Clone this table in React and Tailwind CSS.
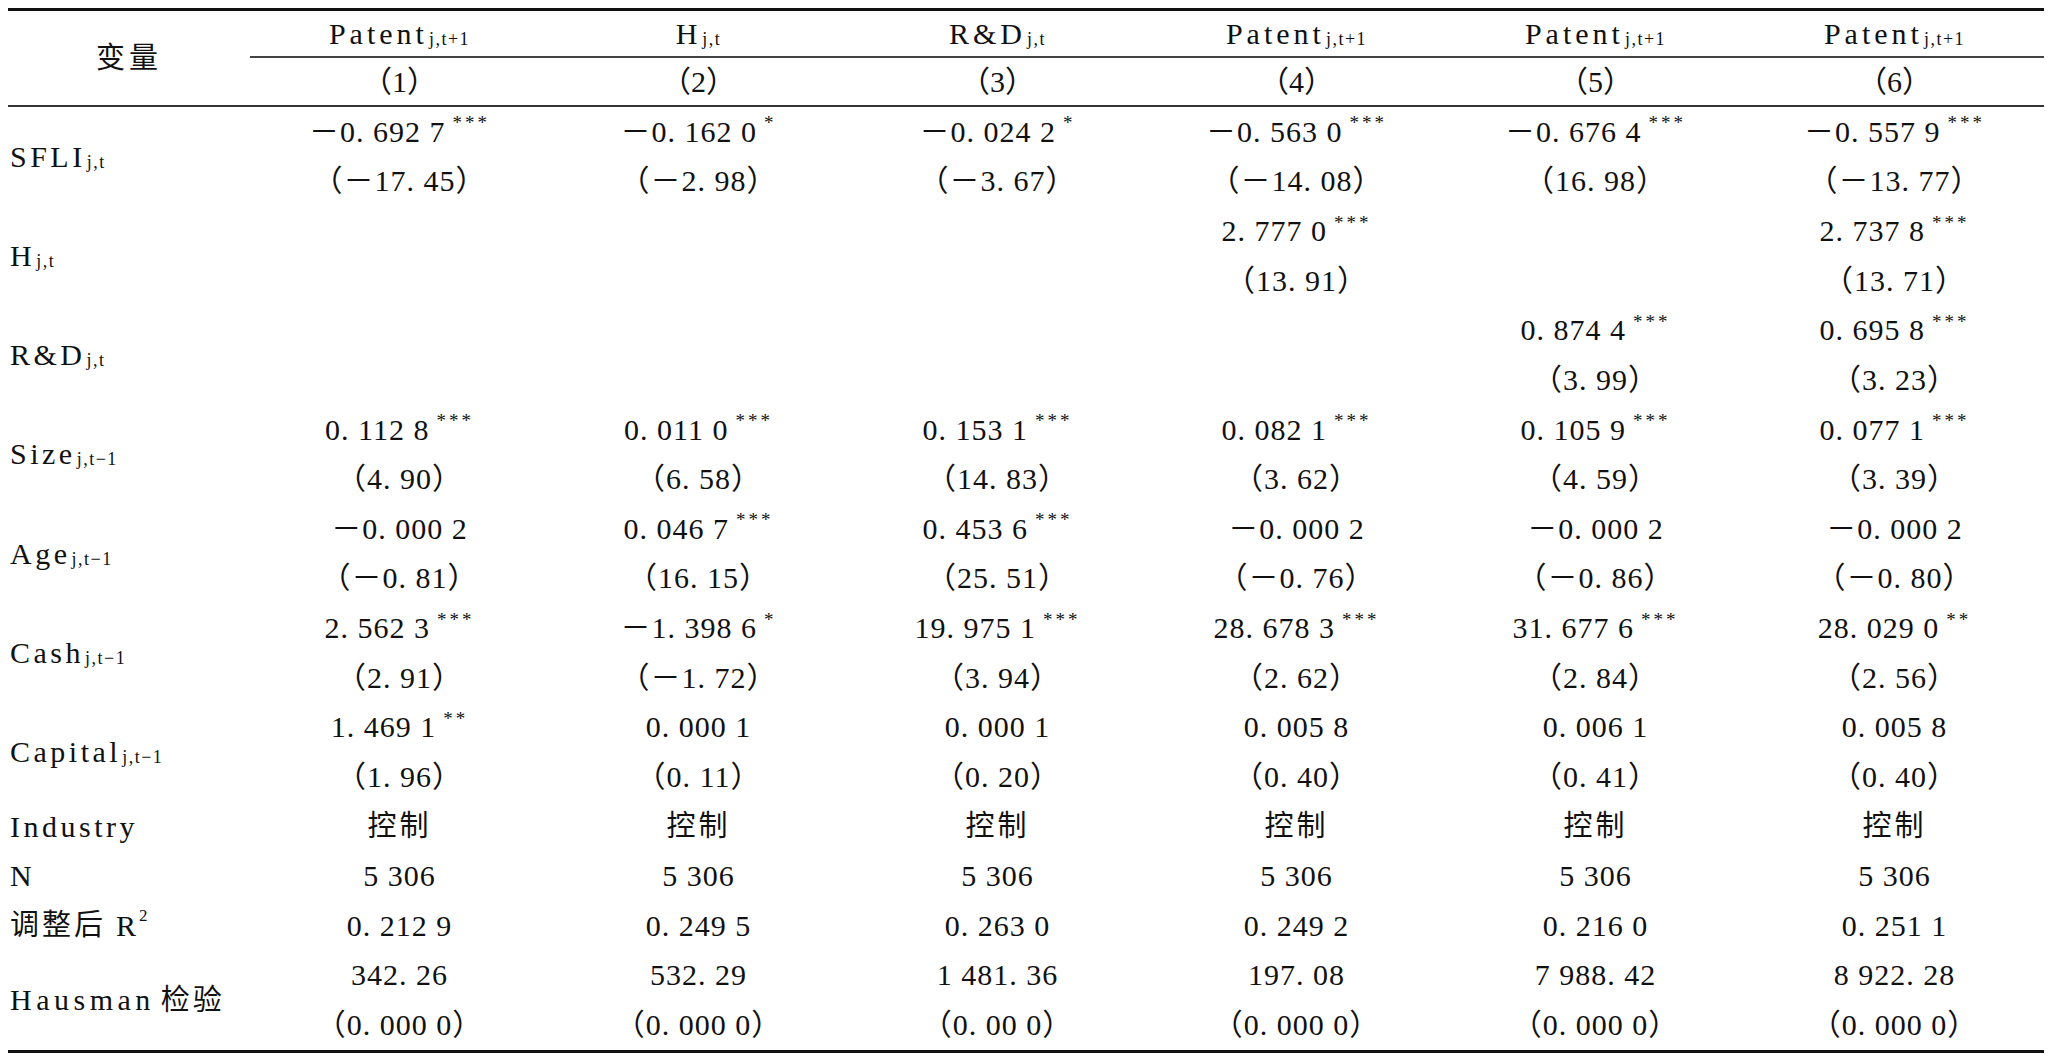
const GRID = "grid grid-cols-[242px_repeat(6,299px)]";
const LINE = "h-[49.63px]";

const rows = [
  {
    label: ["SFLI", "j,t"],
    coef: ["－0. 692 7***", "－0. 162 0*", "－0. 024 2*", "－0. 563 0***", "－0. 676 4***", "－0. 557 9***"],
    t: ["（－17. 45）", "（－2. 98）", "（－3. 67）", "（－14. 08）", "（16. 98）", "（－13. 77）"],
  },
  {
    label: ["H", "j,t"],
    coef: ["", "", "", "2. 777 0***", "", "2. 737 8***"],
    t: ["", "", "", "（13. 91）", "", "（13. 71）"],
  },
  {
    label: ["R&D", "j,t"],
    coef: ["", "", "", "", "0. 874 4***", "0. 695 8***"],
    t: ["", "", "", "", "（3. 99）", "（3. 23）"],
  },
  {
    label: ["Size", "j,t−1"],
    coef: ["0. 112 8***", "0. 011 0***", "0. 153 1***", "0. 082 1***", "0. 105 9***", "0. 077 1***"],
    t: ["（4. 90）", "（6. 58）", "（14. 83）", "（3. 62）", "（4. 59）", "（3. 39）"],
  },
  {
    label: ["Age", "j,t−1"],
    coef: ["－0. 000 2", "0. 046 7***", "0. 453 6***", "－0. 000 2", "－0. 000 2", "－0. 000 2"],
    t: ["（－0. 81）", "（16. 15）", "（25. 51）", "（－0. 76）", "（－0. 86）", "（－0. 80）"],
  },
  {
    label: ["Cash", "j,t−1"],
    coef: ["2. 562 3***", "－1. 398 6*", "19. 975 1***", "28. 678 3***", "31. 677 6***", "28. 029 0**"],
    t: ["（2. 91）", "（－1. 72）", "（3. 94）", "（2. 62）", "（2. 84）", "（2. 56）"],
  },
  {
    label: ["Capital", "j,t−1"],
    coef: ["1. 469 1**", "0. 000 1", "0. 000 1", "0. 005 8", "0. 006 1", "0. 005 8"],
    t: ["（1. 96）", "（0. 11）", "（0. 20）", "（0. 40）", "（0. 41）", "（0. 40）"],
  },
];

function Sub({ children }) {
  return (
    <span className="relative top-[5px] ml-[1px] text-[18px] tracking-[1.5px]">
      {children}
    </span>
  );
}

function Cell({ text }) {
  if (!text) return <div className={LINE} />;
  const m = text.match(/^(.*?)(\**)$/);
  return (
    <div className={`${LINE} flex items-center justify-center whitespace-pre tracking-[1px]`}>
      {m[1]}
      {m[2] && (
        <span className="relative -top-[9px] ml-[7px] text-[19px] tracking-[3px]">
          {m[2]}
        </span>
      )}
    </div>
  );
}

function HeadCell({ name, sub }) {
  return (
    <div className="h-[47px] flex items-center justify-center border-b-2 border-[#444] tracking-[4px]">
      {name}
      <Sub>{sub}</Sub>
    </div>
  );
}

export default function App() {
  return (
    <div className="min-h-screen bg-white pt-[8px] pl-[8px] text-[#111] text-[30px] leading-none font-['Liberation_Serif','Noto_Sans_CJK_SC',serif]">
      <div className="w-[2036px] border-t-[3px] border-b-[3px] border-[#111]">
        <div className={`${GRID} border-b-2 border-[#333]`}>
          <div className="row-span-2 flex items-center justify-center text-[29px] tracking-[4px]">
            变量
          </div>
          <HeadCell name="Patent" sub="j,t+1" />
          <HeadCell name="H" sub="j,t" />
          <HeadCell name="R&D" sub="j,t" />
          <HeadCell name="Patent" sub="j,t+1" />
          <HeadCell name="Patent" sub="j,t+1" />
          <HeadCell name="Patent" sub="j,t+1" />
          {[1, 2, 3, 4, 5, 6].map((n) => (
            <div key={n} className="h-[47px] flex items-center justify-center">
              （{n}）
            </div>
          ))}
        </div>

        {rows.map((r) => (
          <div key={r.label[0]} className={GRID}>
            <div className="flex items-center pl-[2px] tracking-[3.5px]">
              {r.label[0]}
              <Sub>{r.label[1]}</Sub>
            </div>
            {r.coef.map((c, i) => (
              <div key={i}>
                <Cell text={c} />
                <Cell text={r.t[i]} />
              </div>
            ))}
          </div>
        ))}

        <div className={GRID}>
          <div className={`${LINE} flex items-center pl-[2px] tracking-[3.5px]`}>Industry</div>
          {[0, 1, 2, 3, 4, 5].map((i) => (
            <div key={i} className={`${LINE} flex items-center justify-center text-[29px] tracking-[3px]`}>
              控制
            </div>
          ))}
        </div>

        <div className={GRID}>
          <div className={`${LINE} flex items-center pl-[2px]`}>N</div>
          {[0, 1, 2, 3, 4, 5].map((i) => (
            <Cell key={i} text="5 306" />
          ))}
        </div>

        <div className={GRID}>
          <div className={`${LINE} flex items-center pl-[2px] tracking-[3px]`}>
            <span className="text-[29px]">调整后</span>
            <span className="ml-[10px]">R</span>
            <span className="relative -top-[10px] text-[17px]">2</span>
          </div>
          {["0. 212 9", "0. 249 5", "0. 263 0", "0. 249 2", "0. 216 0", "0. 251 1"].map((v, i) => (
            <Cell key={i} text={v} />
          ))}
        </div>

        <div className={GRID}>
          <div className="flex items-center pl-[2px] tracking-[4.5px]">
            Hausman
            <span className="ml-[6px] text-[29px] tracking-[3px]">检验</span>
          </div>
          {[
            ["342. 26", "（0. 000 0）"],
            ["532. 29", "（0. 000 0）"],
            ["1 481. 36", "（0. 00 0）"],
            ["197. 08", "（0. 000 0）"],
            ["7 988. 42", "（0. 000 0）"],
            ["8 922. 28", "（0. 000 0）"],
          ].map(([a, b], i) => (
            <div key={i}>
              <Cell text={a} />
              <Cell text={b} />
            </div>
          ))}
        </div>
      </div>
    </div>
  );
}
